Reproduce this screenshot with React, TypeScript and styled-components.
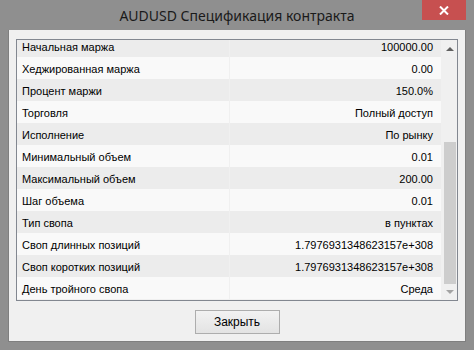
import React from 'react';
import styled, { createGlobalStyle } from 'styled-components';

const GlobalStyle = createGlobalStyle`
  html, body {
    margin: 0;
    padding: 0;
    background: #8f8f8f;
  }
`

const WindowFrame = styled.div`
  width: 474px;
  height: 350px;
  box-sizing: border-box;
  background: #8f8f8f;
  padding: 0 8px 8px 8px;
  display: flex;
  flex-direction: column;
  font-family: "Liberation Sans", Arial, sans-serif;
`

const TitleBar = styled.div`
  position: relative;
  height: 30px;
  display: flex;
  align-items: center;
  justify-content: center;
`

const TitleText = styled.div`
  font-family: "Noto Sans", "Open Sans", sans-serif;
  font-size: 14px;
  color: #1a1a1a;
  padding-top: 1px;
`

const CloseButton = styled.div`
  position: absolute;
  top: 0;
  right: 0;
  width: 44px;
  height: 20px;
  background: #c75050;
  display: flex;
  align-items: center;
  justify-content: center;
`

const Panel = styled.div`
  flex: 1;
  background: #f0f0f0;
  border: 1px solid #7f7f7f;
  border-width: 0 1px 1px 1px;
  padding: 9px 7px 0 7px;
  display: flex;
  flex-direction: column;
`

const ListBox = styled.div`
  height: 262px;
  box-sizing: border-box;
  border: 1px solid #828790;
  background: #f0f0f0;
  display: flex;
  overflow: hidden;
`

const RowsViewport = styled.div`
  flex: 1;
  overflow: hidden;
`

const Rows = styled.div`
  margin-top: -5px;
  display: flex;
  flex-direction: column;
`

const Row = styled.div<{ $even: boolean }>`
  height: 22px;
  display: grid;
  grid-template-columns: 212px 1fr;
  column-gap: 1px;
  background: #f0f0f0;

  > div {
    background: ${p => (p.$even ? '#f9f9f9' : '#ececec')};
    font-size: 11px;
    color: #000;
    display: flex;
    align-items: center;
    white-space: nowrap;
    padding-top: 1px;
  }
`

const Label = styled.div`
  padding-left: 5px;
`

const Value = styled.div`
  justify-content: flex-end;
  padding-right: 8px;
`

const ScrollBar = styled.div`
  width: 15px;
  display: flex;
  flex-direction: column;
  align-items: center;
  margin-left: 1px;
`

const ArrowBox = styled.div<{ $h: number }>`
  height: ${p => p.$h}px;
  width: 100%;
  display: flex;
  align-items: center;
  justify-content: center;
`

const Track = styled.div`
  flex: 1;
`

const Thumb = styled.div`
  width: 12px;
  height: 142px;
  background: #cdcdcd;
`

const Footer = styled.div`
  flex: 1;
  display: flex;
  justify-content: center;
  padding-top: 9px;
`

const CloseDialogButton = styled.button`
  width: 85px;
  height: 24px;
  box-sizing: border-box;
  border: 1px solid #adadad;
  background: linear-gradient(#f2f2f2, #e3e3e3);
  font-family: "Liberation Sans", Arial, sans-serif;
  font-size: 12px;
  color: #000;
  padding: 0;
`

const rows: [string, string][] = [
  ['Начальная маржа', '100000.00'],
  ['Хеджированная маржа', '0.00'],
  ['Процент маржи', '150.0%'],
  ['Торговля', 'Полный доступ'],
  ['Исполнение', 'По рынку'],
  ['Минимальный объем', '0.01'],
  ['Максимальный объем', '200.00'],
  ['Шаг объема', '0.01'],
  ['Тип свопа', 'в пунктах'],
  ['Своп длинных позиций', '1.7976931348623157e+308'],
  ['Своп коротких позиций', '1.7976931348623157e+308'],
  ['День тройного свопа', 'Среда'],
]

const App = () => {
  return (
    <>
      <GlobalStyle />
      <WindowFrame>
        <TitleBar>
          <TitleText>AUDUSD Спецификация контракта</TitleText>
          <CloseButton>
            <svg width="10" height="9" viewBox="0 0 10 9">
              <path d="M1 0.5 L9 8.5 M9 0.5 L1 8.5" stroke="#fff" strokeWidth="2" />
            </svg>
          </CloseButton>
        </TitleBar>
        <Panel>
          <ListBox>
            <RowsViewport>
              <Rows>
                {rows.map(([label, value], i) => (
                  <Row key={label} $even={i % 2 === 1}>
                    <Label>{label}</Label>
                    <Value>{value}</Value>
                  </Row>
                ))}
              </Rows>
            </RowsViewport>
            <ScrollBar>
              <ArrowBox $h={17}>
                <svg width="8" height="4" viewBox="0 0 8 4">
                  <path d="M0 4 L4 0 L8 4 Z" fill="#606060" />
                </svg>
              </ArrowBox>
              <Track />
              <Thumb />
              <ArrowBox $h={16}>
                <svg width="8" height="4" viewBox="0 0 8 4">
                  <path d="M0 0 L8 0 L4 4 Z" fill="#a3a3a3" />
                </svg>
              </ArrowBox>
            </ScrollBar>
          </ListBox>
          <Footer>
            <CloseDialogButton>Закрыть</CloseDialogButton>
          </Footer>
        </Panel>
      </WindowFrame>
    </>
  )
}

export default App
